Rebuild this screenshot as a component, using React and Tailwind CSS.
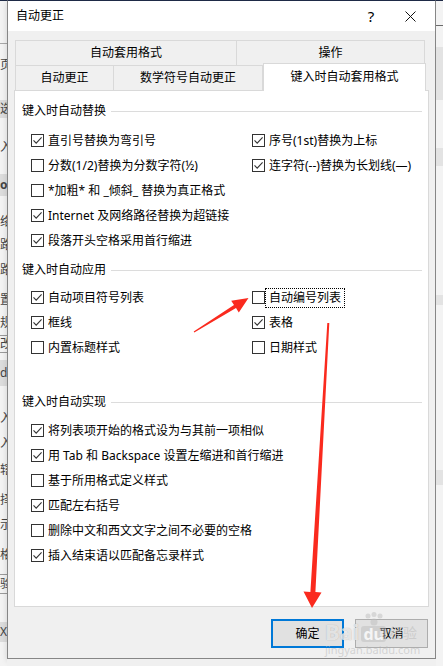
import React from 'react';

const leftStrip = [
  { h: 1, bg: 'bg-[#1e2a46]' },
  { h: 42, bg: 'bg-[#f3f3f3]' },
  { h: 1, bg: 'bg-[#a8a8a8]' },
  { h: 12, bg: 'bg-[#f3f3f3]' },
  { h: 18, bg: 'bg-[#f3f3f3]', ch: '页' },
  { h: 26, bg: 'bg-[#f3f3f3]' },
  { h: 18, bg: 'bg-[#dcdcdc]', ch: '选' },
  { h: 20, bg: 'bg-[#f3f3f3]' },
  { h: 18, bg: 'bg-[#f3f3f3]', ch: '入' },
  { h: 18, bg: 'bg-[#f3f3f3]' },
  { h: 22, bg: 'bg-[#dcdcdc]', ch: 'os', bold: true },
  { h: 16, bg: 'bg-[#f3f3f3]' },
  { h: 20, bg: 'bg-[#f3f3f3]', ch: '络' },
  { h: 4, bg: 'bg-[#f3f3f3]' },
  { h: 18, bg: 'bg-[#f3f3f3]', ch: '路' },
  { h: 7, bg: 'bg-[#f3f3f3]' },
  { h: 18, bg: 'bg-[#f3f3f3]', ch: '路' },
  { h: 11, bg: 'bg-[#f3f3f3]' },
  { h: 20, bg: 'bg-[#f3f3f3]', ch: '置' },
  { h: 3, bg: 'bg-[#f3f3f3]' },
  { h: 20, bg: 'bg-[#f3f3f3]', ch: '规' },
  { h: 2, bg: 'bg-[#f3f3f3]' },
  { h: 18, bg: 'bg-[#f3f3f3]', ch: '改', box: true },
  { h: 7, bg: 'bg-[#f3f3f3]' },
  { h: 26, bg: 'bg-[#dcdcdc]', ch: 'd' },
  { h: 23, bg: 'bg-[#f3f3f3]' },
  { h: 18, bg: 'bg-[#f3f3f3]', ch: '入' },
  { h: 7, bg: 'bg-[#f3f3f3]' },
  { h: 18, bg: 'bg-[#f3f3f3]', ch: '入' },
  { h: 9, bg: 'bg-[#f3f3f3]' },
  { h: 18, bg: 'bg-[#f3f3f3]', ch: '辖' },
  { h: 12, bg: 'bg-[#f3f3f3]' },
  { h: 18, bg: 'bg-[#f3f3f3]', ch: '择' },
  { h: 7, bg: 'bg-[#f3f3f3]' },
  { h: 18, bg: 'bg-[#f3f3f3]', ch: '示' },
  { h: 12, bg: 'bg-[#f3f3f3]' },
  { h: 18, bg: 'bg-[#f3f3f3]', ch: '格' },
  { h: 10, bg: 'bg-[#f3f3f3]' },
  { h: 20, bg: 'bg-[#f3f3f3]', ch: '验', box: true },
  { h: 28, bg: 'bg-[#f3f3f3]' },
  { h: 20, bg: 'bg-[#dcdcdc]', ch: 'X)' },
  { h: 26, bg: 'bg-[#f3f3f3]' },
];

const rightStrip = [
  { h: 1, bg: 'bg-[#1e2a46]' },
  { h: 24, bg: 'bg-[#f3f3f3]' },
  { h: 1, bg: 'bg-[#6a6a6a]' },
  { h: 21, bg: 'bg-[#f3f3f3]' },
  { h: 53, bg: 'bg-[#e3e3e3]' },
  { h: 48, bg: 'bg-[#f3f3f3]' },
  { h: 18, bg: 'bg-[#e3e3e3]' },
  { h: 129, bg: 'bg-[#f3f3f3]' },
  { h: 10, bg: 'bg-[#e3e3e3]' },
  { h: 165, bg: 'bg-[#f3f3f3]' },
  { h: 15, bg: 'bg-[#e3e3e3]' },
  { h: 181, bg: 'bg-[#f3f3f3]' },
];

const Strip = ({ items, w }) => (
  <div className={`${w} shrink-0 flex flex-col overflow-hidden`}>
    {items.map((s, i) => (
      <div
        key={i}
        className={`${s.bg} ${s.box ? 'border-y border-[#9a9a9a]' : ''} shrink-0 flex items-center overflow-hidden whitespace-nowrap text-[12px] leading-none text-[#444] ${s.bold ? 'font-bold' : ''}`}
        style={{ height: s.h }}
      >
        {s.ch}
      </div>
    ))}
  </div>
);

const Check = ({ checked }) => (
  <span className="w-[13px] h-[13px] border border-[#333] bg-white flex items-center justify-center shrink-0">
    {checked && (
      <svg width="11" height="11" viewBox="0 0 11 11">
        <path d="M1.5 5.3 L4.2 8.2 L9.6 2.4" stroke="#333" strokeWidth="1.1" fill="none" />
      </svg>
    )}
  </span>
);

const Item = ({ checked, label, focus }) => (
  <div className="h-[25px] flex items-center gap-[4px]">
    <Check checked={checked} />
    <span className={`leading-none whitespace-nowrap ${focus ? 'outline outline-1 outline-dotted outline-black outline-offset-[3px]' : ''}`}>
      {label}
    </span>
  </div>
);

const Header = ({ title }) => (
  <div className="h-[20px] flex items-center gap-[5px]">
    <span className="leading-none whitespace-nowrap">{title}</span>
    <div className="flex-1 h-px bg-[#dcdcdc]" />
  </div>
);

export default function App() {
  return (
    <div className="relative w-[443px] h-[666px] overflow-hidden flex bg-[#f3f3f3] text-[12px] text-black [font-family:'Noto_Sans','Noto_Sans_CJK_SC',sans-serif]">
      <Strip items={leftStrip} w="w-[7px]" />

      <div className="w-[429px] shrink-0 flex flex-col">
        <div className="h-[659px] flex flex-col border border-[#868686] border-t-[#1e2a46] bg-[#f0f0f0] shadow-[0_2px_6px_rgba(0,0,0,0.15)]">
          {/* title bar */}
          <div className="h-[30px] bg-white flex items-center pl-[8px]">
            <span className="leading-none">自动更正</span>
            <div className="flex-1" />
            <span className="text-[15px] leading-none w-[20px] text-center">?</span>
            <div className="w-[24px]" />
            <svg width="11" height="11" viewBox="0 0 11 11" className="mr-[19px]">
              <path d="M0.5 0.5 L10.5 10.5 M10.5 0.5 L0.5 10.5" stroke="#111" strokeWidth="1" />
            </svg>
          </div>

          {/* body */}
          <div className="flex-1 flex flex-col px-[6px] pt-[9px]">
            <div className="flex h-[25px] ml-px">
              <div className="w-[222px] border border-b-0 border-[#d9d9d9] flex items-center justify-center leading-none">
                自动套用格式
              </div>
              <div className="w-[188px] border border-b-0 border-l-0 border-[#d9d9d9] flex items-center justify-center leading-none">
                操作
              </div>
            </div>
            <div className="flex h-[25px] ml-px items-end">
              <div className="w-[99px] h-[25px] border border-b-0 border-[#d9d9d9] flex items-center justify-center leading-none">
                自动更正
              </div>
              <div className="w-[149px] h-[25px] border border-b-0 border-l-0 border-[#d9d9d9] flex items-center justify-center leading-none">
                数学符号自动更正
              </div>
              <div className="relative z-10 w-[163px] h-[28px] -mb-px bg-white border border-b-0 border-[#d9d9d9] flex items-center justify-center leading-none pb-[1px]">
                键入时自动套用格式
              </div>
            </div>

            {/* panel */}
            <div className="h-[517px] bg-white border border-[#d9d9d9] flex flex-col pl-[7px] pr-[6px] pt-[10px]">
              <Header title="键入时自动替换" />
              <div className="grid grid-cols-[221px_1fr] pl-[9px] mt-[7px]">
                <Item checked label="直引号替换为弯引号" />
                <Item checked label="序号(1st)替换为上标" />
                <Item label="分数(1/2)替换为分数字符(½)" />
                <Item checked label="连字符(--)替换为长划线(—)" />
                <div className="col-span-2">
                  <Item label="*加粗* 和 _倾斜_ 替换为真正格式" />
                </div>
                <div className="col-span-2">
                  <Item checked label="Internet 及网络路径替换为超链接" />
                </div>
                <div className="col-span-2">
                  <Item checked label="段落开头空格采用首行缩进" />
                </div>
              </div>

              <div className="mt-[7px]">
                <Header title="键入时自动应用" />
              </div>
              <div className="grid grid-cols-[221px_1fr] pl-[9px] mt-[5px]">
                <Item checked label="自动项目符号列表" />
                <Item label="自动编号列表" focus />
                <Item checked label="框线" />
                <Item checked label="表格" />
                <Item label="内置标题样式" />
                <Item label="日期样式" />
              </div>

              <div className="mt-[32px]">
                <Header title="键入时自动实现" />
              </div>
              <div className="flex flex-col pl-[9px] mt-[6px]">
                <Item checked label="将列表项开始的格式设为与其前一项相似" />
                <Item checked label="用 Tab 和 Backspace 设置左缩进和首行缩进" />
                <Item label="基于所用格式定义样式" />
                <Item checked label="匹配左右括号" />
                <Item label="删除中文和西文文字之间不必要的空格" />
                <Item checked label="插入结束语以匹配备忘录样式" />
              </div>
            </div>

            {/* buttons */}
            <div className="flex justify-end gap-[11px] mt-[12px] pr-px">
              <button className="w-[73px] h-[29px] bg-[#e1e1e1] border-2 border-[#0078d7] leading-none">
                确定
              </button>
              <button className="w-[73px] h-[29px] bg-[#e1e1e1] border border-[#adadad] leading-none">
                取消
              </button>
            </div>
          </div>
        </div>
        <div className="flex-1 bg-[#f0f0f0]" />
      </div>

      <Strip items={rightStrip} w="w-[7px]" />

      {/* baidu watermark */}
      <div className="absolute left-[325px] top-[611px] w-[92px] h-[44px] pointer-events-none flex flex-col items-start">
        <div className="flex items-end h-[31px]">
          <span className="text-[22px] font-bold leading-none text-white/70 [text-shadow:0_0_1px_rgba(120,120,120,0.6)]">Bai</span>
          <div className="flex flex-col items-center ml-[2px]">
            <svg width="22" height="14" viewBox="0 0 22 14">
              <circle cx="5" cy="4" r="2.5" fill="rgba(190,190,190,0.5)" />
              <circle cx="11" cy="2.5" r="2.5" fill="rgba(190,190,190,0.5)" />
              <circle cx="17" cy="4" r="2.5" fill="rgba(190,190,190,0.5)" />
              <circle cx="11" cy="10" r="3.5" fill="rgba(190,190,190,0.5)" />
            </svg>
            <span className="px-[2px] rounded-[3px] bg-[rgba(190,190,190,0.5)] text-[16px] font-bold leading-none text-white/80">du</span>
          </div>
          <span className="text-[14px] leading-none text-[rgba(190,190,190,0.6)] ml-[3px] mb-[2px]">经验</span>
        </div>
        <span className="text-[11px] leading-none text-[rgba(190,190,190,0.6)] mt-[2px]">jingyan.baidu.com</span>
      </div>

      {/* red arrows */}
      <svg className="absolute inset-0 pointer-events-none" width="443" height="666" viewBox="0 0 443 666">
        <polygon
          points="193.7,331.5 234,305.1 231.2,300.7 248.5,298 238.8,312.5 236,308.1 194.3,332.5"
          fill="#fa2a1e"
        />
        <polygon
          points="327.3,323 329.3,323 315.4,592 321.5,592.5 312,608 303.5,591.5 310.4,592"
          fill="#fa2a1e"
        />
      </svg>
    </div>
  );
}
